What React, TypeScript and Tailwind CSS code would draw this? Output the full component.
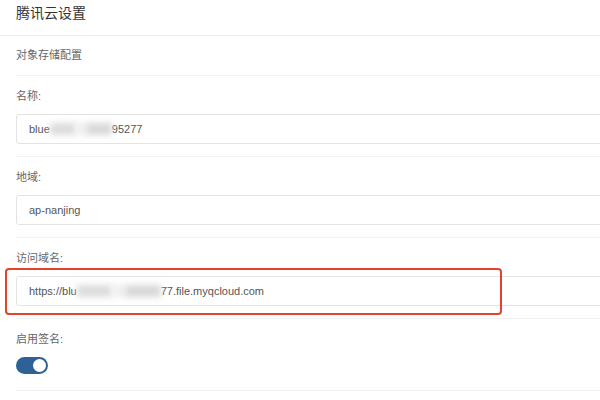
import { ReactNode } from 'react';

const font = { fontFamily: '"Liberation Sans", "Noto Sans CJK SC", sans-serif' };

function Redacted({ width }: { width: number }) {
  // blurred mask over a hidden part of the value
  return (
    <span className="inline-flex items-center align-middle" style={{ width }}>
      <span className="h-[12px] w-[42%] bg-[#dcdcdc] blur-[3px]" />
      <span className="h-[12px] w-[16%] bg-[#efefef] blur-[3px]" />
      <span className="h-[12px] w-[42%] bg-[#d8d8d8] blur-[3px]" />
    </span>
  );
}

function Field({ label, children }: { label: string; children: ReactNode }) {
  return (
    <div className="pt-[11px] pb-3 border-b border-[#f2f2f2]">
      <div className="text-[11px] leading-[18px] text-[#666] mb-[9px]">{label}</div>
      {children}
    </div>
  );
}

function TextBox({ children }: { children: ReactNode }) {
  return (
    <div className="h-[30px] w-[620px] flex items-center px-3 border border-[#e3e3e3] rounded-[3px] text-[11px] text-[#555] whitespace-nowrap">
      {children}
    </div>
  );
}

export default function App() {
  return (
    <div className="w-[600px] h-[400px] overflow-hidden bg-white" style={font}>
      {/* Header */}
      <div className="h-[36px] pt-[1px] px-4 border-b border-[#ececec]">
        <h1 className="text-[14px] leading-[24px] text-[#333]">腾讯云设置</h1>
      </div>

      <div className="pl-4">
        <div className="h-[40px] flex items-center border-b border-[#f2f2f2] text-[11px] text-[#666]">
          对象存储配置
        </div>

        <Field label="名称:">
          <TextBox>
            blue<Redacted width={62} />95277
          </TextBox>
        </Field>

        <Field label="地域:">
          <TextBox>ap-nanjing</TextBox>
        </Field>

        <Field label="访问域名:">
          <div className="relative">
            <TextBox>
              https://blu<Redacted width={84} />77.file.myqcloud.com
            </TextBox>
            <div className="absolute -left-[11px] -top-[8px] w-[497px] h-[47px] border-2 border-[#e2432a] rounded-[4px]" />
          </div>
        </Field>

        <div className="pt-[11px] pb-4 border-b border-[#f2f2f2]">
          <div className="text-[11px] leading-[18px] text-[#666] mb-[9px]">启用签名:</div>
          <div className="w-[32px] h-[17px] rounded-full bg-[#2e6196] flex items-center justify-end px-[2px]">
            <span className="w-[13px] h-[13px] rounded-full bg-white" />
          </div>
        </div>
      </div>
    </div>
  );
}
